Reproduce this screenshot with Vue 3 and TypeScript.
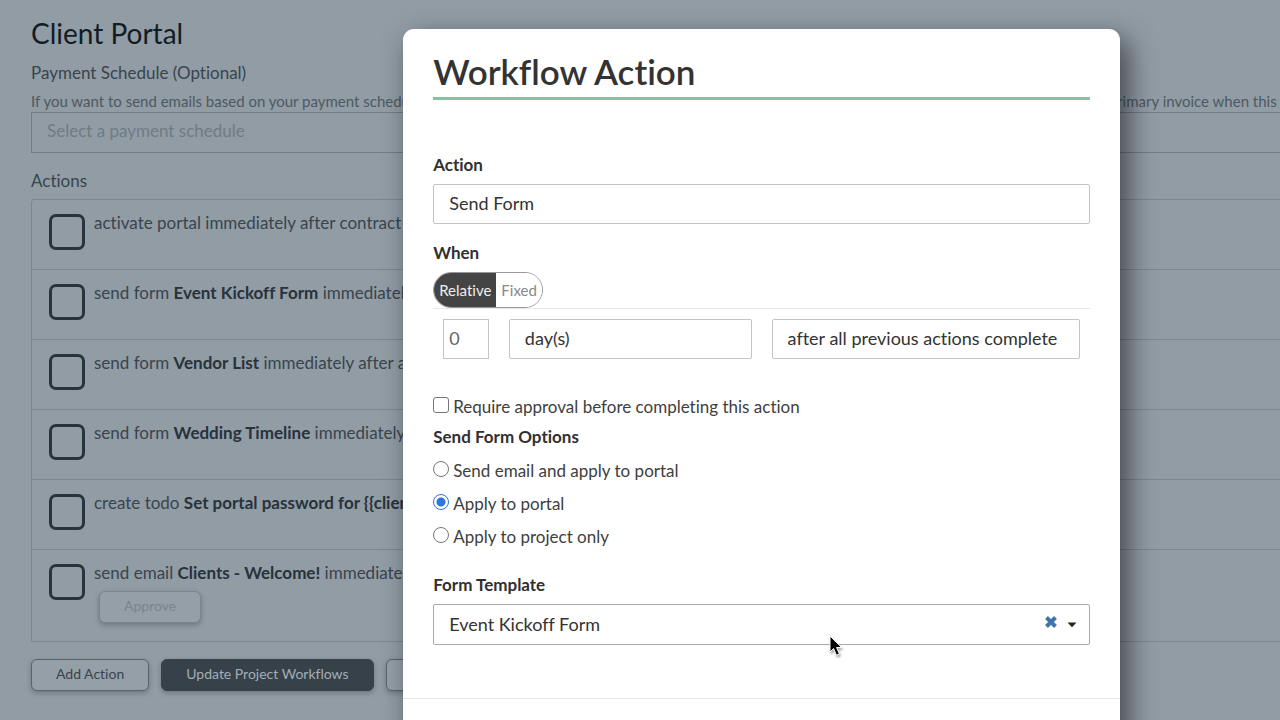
<script setup lang="ts">
import { ref } from 'vue'

interface WorkflowStep {
  verb: string
  name: string
  timing: string
  approval?: boolean
}

const steps = ref<WorkflowStep[]>([
  { verb: 'activate portal immediately after contract s', name: '', timing: '' },
  { verb: 'send form', name: 'Event Kickoff Form', timing: 'immediately' },
  { verb: 'send form', name: 'Vendor List', timing: 'immediately after a' },
  { verb: 'send form', name: 'Wedding Timeline', timing: 'immediately' },
  { verb: 'create todo', name: 'Set portal password for {{clien', timing: '' },
  { verb: 'send email', name: 'Clients - Welcome!', timing: 'immediately', approval: true },
])

const options = [
  { value: 'both', label: 'Send email and apply to portal' },
  { value: 'portal', label: 'Apply to portal' },
  { value: 'project', label: 'Apply to project only' },
]

const mode = ref('Relative')
const delay = ref('0')
const requireApproval = ref(false)
const sendOption = ref('portal')
</script>

<template>
  <div class="screen">
    <main class="page">
      <h1>Client Portal</h1>
      <label class="field-label" for="schedule">Payment Schedule (Optional)</label>
      <p class="hint">
        <span>If you want to send emails based on your payment schedule</span>
        <span>primary invoice when this w</span>
      </p>
      <input id="schedule" class="schedule" type="text" placeholder="Select a payment schedule" />
      <h2 class="actions-title">Actions</h2>
      <ul class="steps">
        <li v-for="(step, i) in steps" :key="i" class="step">
          <input :id="`step-${i}`" type="checkbox" class="step-box" />
          <div class="step-body">
            <label :for="`step-${i}`">{{ step.verb }} <b>{{ step.name }}</b> {{ step.timing }}</label>
            <button v-if="step.approval" type="button" class="btn approve" disabled>Approve</button>
          </div>
        </li>
      </ul>
      <div class="page-buttons">
        <button type="button" class="btn">Add Action</button>
        <button type="button" class="btn update">Update Project Workflows</button>
        <button type="button" class="btn" aria-label="More"></button>
      </div>
    </main>

    <section class="modal" role="dialog" aria-labelledby="modal-title">
      <div class="modal-body">
        <h2 id="modal-title" class="modal-title">Workflow Action</h2>

        <label class="label" for="action">Action</label>
        <select id="action" class="control">
          <option>Send Form</option>
        </select>

        <span id="when" class="label when">When</span>
        <div class="toggle" role="group" aria-labelledby="when">
          <button
            v-for="m in ['Relative', 'Fixed']"
            :key="m"
            type="button"
            :class="{ active: mode === m }"
            @click="mode = m"
          >{{ m }}</button>
        </div>
        <div class="timing">
          <div><input v-model="delay" class="control number" type="text" aria-label="Amount" /></div>
          <div>
            <select class="control" aria-label="Unit"><option>day(s)</option></select>
          </div>
          <div>
            <select class="control" aria-label="Trigger"><option>after all previous actions complete</option></select>
          </div>
        </div>

        <label class="choice approval">
          <input v-model="requireApproval" type="checkbox" />
          <span>Require approval before completing this action</span>
        </label>

        <fieldset class="options">
          <legend class="label">Send Form Options</legend>
          <label v-for="o in options" :key="o.value" class="choice">
            <input v-model="sendOption" type="radio" name="send-option" :value="o.value" />
            <span>{{ o.label }}</span>
          </label>
        </fieldset>

        <label class="label template-label" for="template">Form Template</label>
        <div class="template">
          <select id="template" class="control">
            <option>Event Kickoff Form</option>
          </select>
          <button type="button" class="clear" aria-label="Clear">
            <svg width="14" height="14" viewBox="0 0 14 14">
              <path d="M2.5 2.5 L11.5 11.5 M11.5 2.5 L2.5 11.5" stroke="#4274a9" stroke-width="4" />
            </svg>
          </button>
          <svg class="caret" width="10" height="6" viewBox="0 0 10 6">
            <path d="M0.5 0.5 H9.5 L5 5.2 Z" fill="#222" />
          </svg>
        </div>
      </div>
      <footer class="modal-footer"></footer>
    </section>

    <svg class="pointer" width="16" height="24" viewBox="0 0 16 24">
      <path
        d="M1 1 V17 L4.6 13.6 L7.4 20.2 L10.4 19 L7.6 12.5 H12.6 Z"
        fill="#000"
        stroke="#fff"
        stroke-width="1"
      />
    </svg>
  </div>
</template>

<style>
html,
body {
  margin: 0;
  background: #919ca5;
}
</style>

<style scoped>
.screen {
  position: relative;
  height: 100vh;
  overflow: hidden;
  background: #919ca5;
  color: #39444d;
  font-family: Lato, "Open Sans", sans-serif;
  font-size: 17px;
  line-height: 22px;
  font-variant-ligatures: none;
}
.screen * {
  box-sizing: border-box;
}
button,
input,
select {
  font: inherit;
  font-variant-ligatures: none;
  color: inherit;
  margin: 0;
}
.page {
  padding: 16px 0 0 31px;
  white-space: nowrap;
}
h1 {
  margin: 0 0 12px;
  font-size: 28px;
  line-height: 34px;
  font-weight: 400;
  color: #111c25;
}
.field-label {
  display: block;
}
.hint {
  display: flex;
  justify-content: space-between;
  margin: 7px -12px 1px 0;
  font-size: 15px;
  line-height: 20px;
  color: #4e5962;
}
.schedule {
  display: block;
  width: 100%;
  height: 41px;
  padding: 0 15px 4px;
  border: 1px solid #717c85;
  border-right: 0;
  background: transparent;
}
.schedule::placeholder {
  color: #707b84;
  opacity: 1;
}
.actions-title {
  margin: 17px 0 7px;
  font-size: 17px;
  line-height: 22px;
  font-weight: 400;
}
.steps {
  margin: 0;
  padding: 0;
  list-style: none;
  border: solid #7c8790;
  border-width: 0 0 1px 1px;
  border-top-left-radius: 4px;
}
.step {
  display: flex;
  gap: 9px;
  min-height: 70px;
  padding: 12px 0 18px 17px;
  border-top: 1px solid #7c8790;
}
.step-box {
  appearance: none;
  flex: none;
  width: 36px;
  height: 36px;
  margin-top: 2px;
  border: 3px solid #28333c;
  border-radius: 7px;
}
.step b {
  color: #27323b;
}
.step-body {
  display: flex;
  flex-direction: column;
  align-items: flex-start;
  gap: 7px;
}
.btn {
  height: 32px;
  padding: 0 24px 2px;
  border: 1px solid #58636c;
  border-radius: 6px;
  background: #949fa8;
  font-size: 14px;
  box-shadow: 0 2px 5px rgba(40, 50, 60, 0.35);
}
.approve {
  margin-left: 5px;
  border-color: #7a858e;
  color: #7a858e;
}
.page-buttons {
  display: flex;
  gap: 12px;
  margin-top: 17px;
}
.update {
  background: #36414a;
  border-color: #36414a;
  color: #a3aeb7;
}
.modal {
  position: absolute;
  top: 29px;
  left: 31.5%;
  width: 56%;
  min-height: 100%;
  border-radius: 11px;
  background: #fff;
  color: #404040;
  box-shadow: 8px 10px 28px rgba(0, 0, 0, 0.55);
}
.modal-body {
  display: flex;
  flex-direction: column;
  padding: 22px 30px 53px;
}
.modal-title {
  margin: 0 0 54px;
  padding-bottom: 6px;
  border-bottom: 3px solid #86c29f;
  font-size: 35px;
  line-height: 40px;
  font-weight: 600;
  color: #333;
}
.label {
  display: block;
  margin-bottom: 8px;
  padding: 0;
  font-weight: 700;
  color: #303030;
}
.control {
  appearance: none;
  display: block;
  width: 100%;
  height: 40px;
  padding: 0 15px 2px;
  border: 1px solid #c4c4c4;
  border-radius: 2px;
  background: #fff;
  color: #333;
  font-size: 18px;
}
.when {
  margin-top: 18px;
}
.toggle {
  display: flex;
  align-self: flex-start;
  height: 36px;
  border: 1px solid #999;
  border-radius: 18px;
  overflow: hidden;
}
.toggle button {
  padding: 0 5px 1px;
  border: 0;
  background: #fff;
  color: #888;
  font-size: 15px;
}
.toggle .active {
  background: #444;
  color: #eee;
}
.timing {
  display: grid;
  grid-template-columns: 10fr 40fr 50fr;
  border-top: 1px solid #e8e8e8;
}
.timing > div {
  min-width: 0;
  padding: 10px;
}
.number {
  padding: 0 5px 2px;
  border-radius: 0;
  color: #666;
}
.choice {
  display: flex;
  gap: 4px;
}
.choice input {
  appearance: none;
  flex: none;
  width: 16px;
  height: 16px;
  margin-top: 1px;
  border: 1px solid #767676;
  border-radius: 3px;
  background: #fff;
}
.choice input[type='radio'] {
  border-radius: 50%;
}
.choice input:checked {
  border-color: #2f74e0;
  background: radial-gradient(circle, #2f74e0 4px, #fff 5px);
}
.approval {
  margin-top: 27px;
}
.options {
  display: flex;
  flex-direction: column;
  gap: 11px;
  margin: 8px 0 0;
  padding: 0;
  border: 0;
}
.options .label {
  margin-bottom: 12px;
}
.template-label {
  margin-top: 26px;
}
.template {
  position: relative;
}
.template .control {
  height: 41px;
  border-color: #aaa;
}
.clear {
  position: absolute;
  top: 11px;
  right: 32px;
  display: flex;
  padding: 0;
  border: 0;
  background: none;
}
.caret {
  position: absolute;
  top: 18px;
  right: 13px;
}
.modal-footer {
  border-top: 1px solid #e5e5e5;
}
.pointer {
  position: absolute;
  top: 635px;
  left: 829px;
  filter: drop-shadow(1px 2px 1px rgba(0, 0, 0, 0.35));
}
</style>
